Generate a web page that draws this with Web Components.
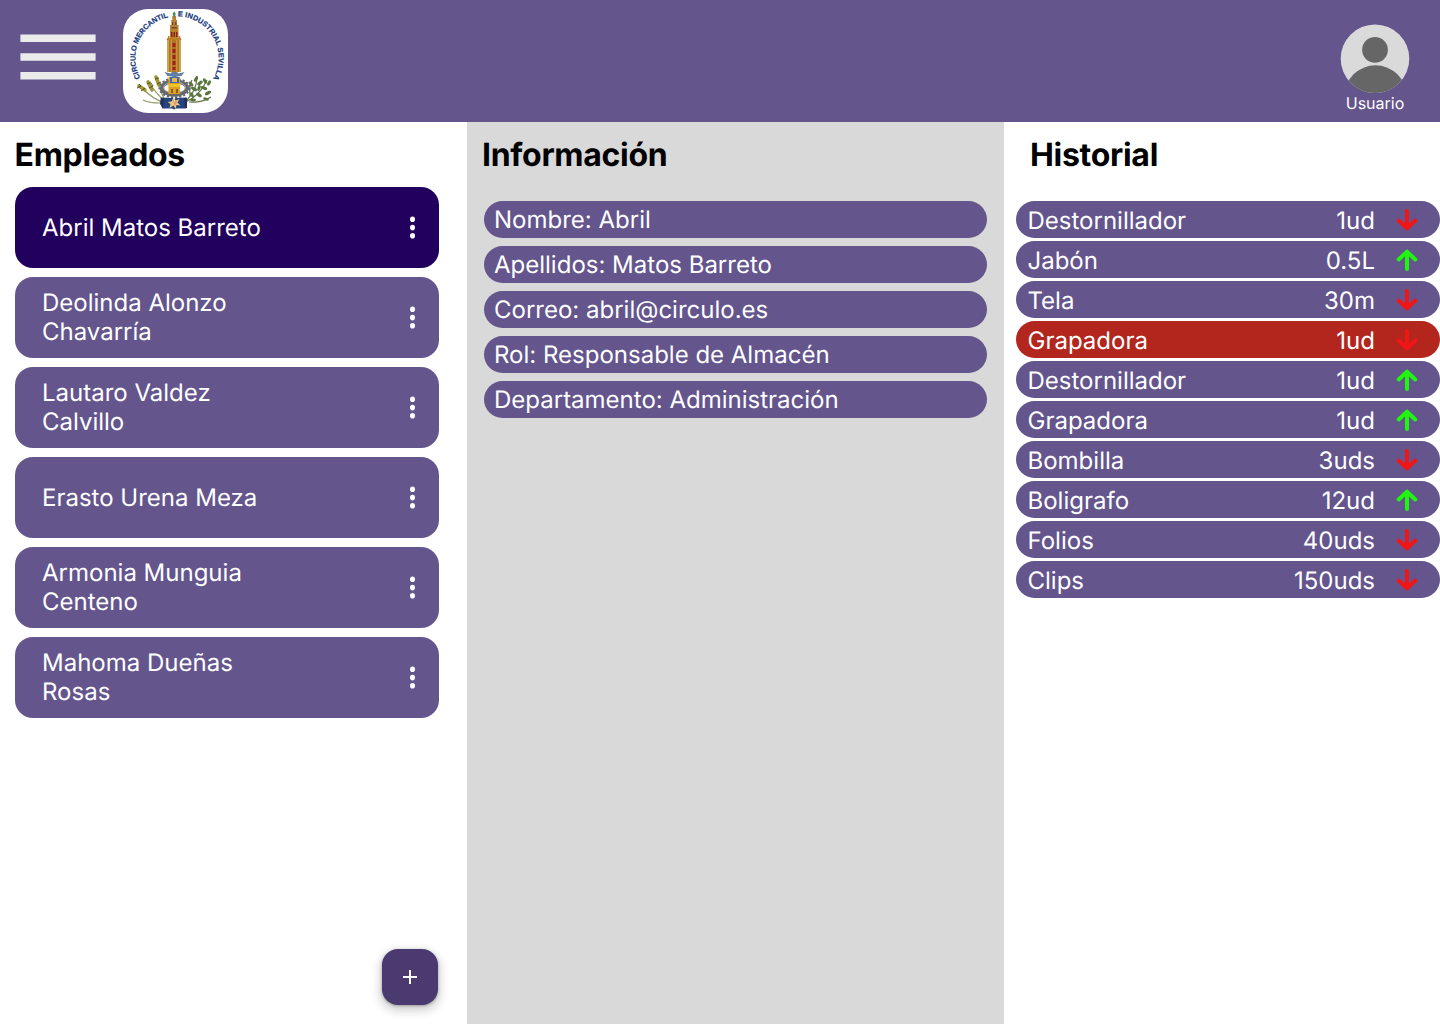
<!DOCTYPE html>
<html lang="es">
<head>
<meta charset="utf-8">
<title>Empleados</title>
<style>
body{margin:0;font-family:Inter,"Liberation Sans",sans-serif;background:#fff;text-rendering:geometricPrecision}
</style>
</head>
<body>
<staff-app></staff-app>
<script>
const define=(name,html,setup)=>{
  const t=document.createElement('template');
  t.innerHTML=html;
  customElements.define(name,class extends HTMLElement{
    constructor(){super();this.attachShadow({mode:'open'}).append(t.content.cloneNode(true));}
    connectedCallback(){if(setup)setup(this,this.shadowRoot);}
  });
};

define('menu-button',`<style>:host{display:block;width:76px;height:46px}svg{display:block}</style>
<svg width="76" height="46" fill="#ebebeb"><path d="M.4.4h75.2v7.5H.4zM.4 19.2h75.2v7.5H.4zM.4 38h75.2v7.5H.4z"/></svg>`);

define('club-logo',`<style>:host{display:block;width:105px;height:104px;border-radius:25px;background:#fff}svg{display:block}text{font:bold 7.3px "Liberation Sans",sans-serif;fill:#17387d;stroke:#17387d;stroke-width:.2px}</style>
<svg width="105" height="104" viewBox="123 9 105 104">
<defs><path id="a" d="M140.400 77.800A41.6 41.6 0 0 1 169.800 17"/><path id="b" d="M177.800 16.400A41.6 41.6 0 0 1 211.100 81.900"/></defs>
<text><textPath href="#a" textLength="77">CIRCULO MERCANTIL</textPath></text>
<text><textPath href="#b" textLength="86">E INDUSTRIAL SEVILLA</textPath></text>
<g fill="none" stroke="#8f9a66" stroke-width="1.200">
<path d="M166 103Q153 100 141 87M165 101Q156 94 149 82M164 99Q160 89 156 78M161 103Q148 103 143 100"/>
<path stroke="#5e7448" d="M184 103Q200 96 207 80M187 100Q197 90 197 76M189 102Q202 103 211 97M190 96Q189 86 192 80"/></g>
<g fill="none" stroke="#a39535" stroke-width="3.600" stroke-linecap="round"><path d="M139 86l6 4M148 82l4 8M156 77l3 8"/></g>
<g stroke="#41451d" stroke-width=".9"><path d="M137 88l4-2M141 91l4-3M147 84l4-2M149 88l4-2M155 79l4-1M157 84l4-2M139 84l2 2M151 83l2 3"/></g>
<g fill="#59753d"><ellipse cx="191" cy="84" rx="3" ry="1.600" transform="rotate(50 191 84)"/><ellipse cx="196" cy="79" rx="3" ry="1.600" transform="rotate(-60 196 79)"/><ellipse cx="200" cy="83" rx="3.200" ry="1.600" transform="rotate(-40 200 83)"/><ellipse cx="205" cy="81" rx="3" ry="1.600" transform="rotate(60 205 81)"/><ellipse cx="209" cy="83" rx="3" ry="1.500" transform="rotate(-60 209 83)"/><ellipse cx="194" cy="89" rx="3.300" ry="1.600" transform="rotate(30 194 89)"/><ellipse cx="204" cy="88" rx="3.400" ry="1.600" transform="rotate(20 204 88)"/><ellipse cx="199" cy="88" rx="3" ry="1.500" transform="rotate(-70 199 88)"/><ellipse cx="199" cy="95" rx="3.200" ry="1.600" transform="rotate(30 199 95)"/><ellipse cx="208" cy="93" rx="3.500" ry="1.600" transform="rotate(-30 208 93)"/><ellipse cx="192" cy="95" rx="3" ry="1.500" transform="rotate(60 192 95)"/><ellipse cx="193" cy="100" rx="3" ry="1.400"/><ellipse cx="206" cy="99" rx="3" ry="1.400" transform="rotate(20 206 99)"/></g>
<ellipse cx="174.500" cy="88" rx="12.500" ry="6.800" fill="none" stroke="#66676b" stroke-width="4"/>
<ellipse cx="174.500" cy="88" rx="15" ry="9.200" fill="none" stroke="#66676b" stroke-width="2" stroke-dasharray="2.200 1.900"/>
<ellipse cx="174.500" cy="87.500" rx="11" ry="5.600" fill="none" stroke="#aeaeb0" stroke-width="1"/>
<path d="M160.700 97.500l12 .5 1.500 1.500 1.500-1.500 11-.500-.5 11-10 0-2 1-2-1-10 0-1.500-5z" fill="#26427f"/>
<path d="M161 98l-1 6 3 4 1-9zM184 98l1 10 2 0v-10z" fill="#22305a"/>
<path d="M174 97l1.500 3.500 4-1.500-2 3.500 3 3-4-.5-1 4-2-3.500-4 2.500 1-4-3-2 4-.5z" fill="#e9c97c"/><path d="M172 99l2.500 3 3.500-2-3 6z" fill="#e39a78"/>
<path d="M168.500 77h11.500v17h-11.500z" fill="#dca021"/><path d="M170 77h9v6h-9z" fill="#3b69c0"/><path d="M172 78h5v4h-5z" fill="#e5b64a"/><path d="M168.500 84h12l-1.500 3h-9z" fill="#f0c627"/><path d="M171 89h2v4h-2zM176 89h2v4h-2z" fill="#8d5e22"/>
<path d="M164.500 72l6 1.500 1.500-1.500h5l1.500 1.500 6-1.500-3 4-4 .5-3 1-3-1-4-.5z" fill="#64809e"/>
<path d="M167 38h14v34h-14z" fill="#af7628"/><path d="M167 38h2v34h-2zM179 38h2v34h-2zM170.800 38h1v34h-1zM176.300 38h1v34h-1z" fill="#d0a14b"/>
<path d="M172.500 43h3v4h-3zM172.500 49h3v4h-3zM172.500 55h3v4h-3zM172.500 61h3v4h-3zM172.500 67h3v3h-3z" fill="#a3211b"/>
<path d="M166.500 40l1-2h13l1 2zM168 36h1.500v3H168zM178.800 36h1.500v3h-1.500zM170 30h8.500v9h-8.500z" fill="#b98028"/><path d="M171 32h1.500v5H171zM173.500 32h1.500v5h-1.500zM176 32h1.500v5H176z" fill="#88251e"/>
<path d="M170 25h8.500v5H170zM171.300 20h5.800v5h-5.800zM172.300 16h3.800v4h-3.800z" fill="#b78236"/><path d="M172 22h1.300v3H172zM175 22h1.300v3H175zM171.500 27h5.500v1.500h-5.500z" fill="#7e4726"/>
<path d="M174.300 11.500l1.300 2-.4 3h-1.700l-.8-3z" fill="#3e8b51"/>
</svg>`);

define('user-badge',`<style>:host{display:flex;flex-direction:column;align-items:center;width:70px;color:#fff;font-size:16px;line-height:19px;font-weight:400}svg{display:block}</style>
<svg width="70" height="70" viewBox="0 0 70 70"><defs><clipPath id="c"><circle cx="35" cy="34.700" r="34.300"/></clipPath></defs><circle cx="35" cy="34.700" r="34.300" fill="#dadada"/><circle cx="35" cy="25.800" r="12.900" fill="#666"/><ellipse cx="35.500" cy="72" rx="31" ry="30.700" fill="#666" clip-path="url(#c)"/></svg><span><slot></slot></span>`);

define('top-bar',`<style>:host{display:flex;box-sizing:border-box;height:122px;background:#64558d;padding:0 30px 0 20px}menu-button{margin-top:34px}club-logo{margin:9px 0 0 27px}user-badge{margin:24px 0 0 auto}</style>
<menu-button></menu-button><club-logo></club-logo><user-badge>Usuario</user-badge>`);

define('panel-title',`<style>:host{display:block;height:42px;line-height:42px;font-size:32px;font-weight:700;letter-spacing:-.3px;color:#000;white-space:nowrap}</style><slot></slot>`);

define('employee-card',`<style>:host{display:flex;align-items:center;justify-content:space-between;box-sizing:border-box;width:424px;height:81px;padding:0 23px 0 27px;border-radius:18px;background:#64558d;color:#fff;font-size:24px;line-height:29px;font-weight:400}:host([selected]){background:#22005d}span{width:240px;padding-bottom:1px}svg{display:block}</style>
<span><slot></slot></span><svg width="7" height="24" fill="#fff"><ellipse cx="3.500" cy="3.200" rx="2.500" ry="2.800"/><ellipse cx="3.500" cy="11.600" rx="2.500" ry="2.800"/><ellipse cx="3.500" cy="19.800" rx="2.500" ry="2.800"/></svg>`);

define('info-row',`<style>:host{display:block;box-sizing:border-box;width:503px;height:37px;padding-left:10px;border-radius:18.5px;background:#64558d;color:#fff;font-size:24px;line-height:37px;font-weight:400}</style><slot></slot>`);

define('move-arrow',`<style>:host{display:block;width:24px;height:24px;color:#f21515}:host([up]){color:#1ff50f}:host([up]) svg{transform:scaleY(-1)}svg{display:block}</style>
<svg width="24" height="24" fill="none" stroke="currentColor" stroke-width="4" stroke-linecap="round" stroke-linejoin="round"><path d="M12 3v17M3.700 12.500l8.300 7.800 8.300-7.800"/></svg>`);

define('history-row',`<style>:host{display:flex;align-items:center;box-sizing:border-box;width:424px;height:37px;padding:2px 21px 0 11.5px;border-radius:18.5px;background:#64558d;color:#fff;font-size:24px;line-height:35px;font-weight:400}:host([alert]){background:#b3261e}.q{margin-left:auto;margin-right:20px}move-arrow{margin-top:-2px}</style>
<span><slot></slot></span><span class="q"><slot name="qty"></slot></span><move-arrow></move-arrow>`,
(el,root)=>root.querySelector('move-arrow').toggleAttribute('up',el.hasAttribute('up')));

define('add-button',`<style>:host{display:flex;align-items:center;justify-content:center;width:56px;height:56px;border-radius:16px;background:#4a3a70;box-shadow:0 1px 3px rgba(0,0,0,.3),0 4px 8px 3px rgba(0,0,0,.15)}svg{display:block}</style><svg width="14" height="14"><path d="M7 0v14M0 7h14" stroke="#fff" stroke-width="2"/></svg>`);

define('staff-app',`<style>
:host{display:flex;flex-direction:column;width:1440px;height:1024px;overflow:hidden}
main{display:flex;flex:1}
section{display:flex;flex-direction:column;box-sizing:border-box;padding-top:12px}
.staff{width:467px;padding-left:15px}.info{width:537px;padding-left:17px;background:#d9d9d9}.log{width:436px;padding-left:12px}
.list{display:flex;flex-direction:column}
.staff .list{gap:9px;margin-top:11px}.info .list{gap:8px;margin-top:25px}.log .list{gap:3px;margin-top:25px}
.staff panel-title{margin-left:-.5px}.info panel-title{margin-left:-2px}.log panel-title{margin-left:14px}
add-button{margin:auto 0 19px 367px}
</style>
<top-bar></top-bar>
<main>
<section class="staff"><panel-title>Empleados</panel-title><div class="list">
<employee-card selected>Abril Matos Barreto</employee-card>
<employee-card>Deolinda Alonzo<br>Chavarría</employee-card>
<employee-card>Lautaro Valdez<br>Calvillo</employee-card>
<employee-card>Erasto Urena Meza</employee-card>
<employee-card>Armonia Munguia<br>Centeno</employee-card>
<employee-card>Mahoma Dueñas<br>Rosas</employee-card>
</div><add-button></add-button></section>
<section class="info"><panel-title>Información</panel-title><div class="list">
<info-row>Nombre: Abril</info-row><info-row>Apellidos: Matos Barreto</info-row><info-row>Correo: abril@circulo.es</info-row><info-row>Rol: Responsable de Almacén</info-row><info-row>Departamento: Administración</info-row>
</div></section>
<section class="log"><panel-title>Historial</panel-title><div class="list">
<history-row>Destornillador<span slot="qty">1ud</span></history-row>
<history-row up>Jabón<span slot="qty">0.5L</span></history-row>
<history-row>Tela<span slot="qty">30m</span></history-row>
<history-row alert>Grapadora<span slot="qty">1ud</span></history-row>
<history-row up>Destornillador<span slot="qty">1ud</span></history-row>
<history-row up>Grapadora<span slot="qty">1ud</span></history-row>
<history-row>Bombilla<span slot="qty">3uds</span></history-row>
<history-row up>Boligrafo<span slot="qty">12ud</span></history-row>
<history-row>Folios<span slot="qty">40uds</span></history-row>
<history-row>Clips<span slot="qty">150uds</span></history-row>
</div></section>
</main>`);
</script>
</body>
</html>
